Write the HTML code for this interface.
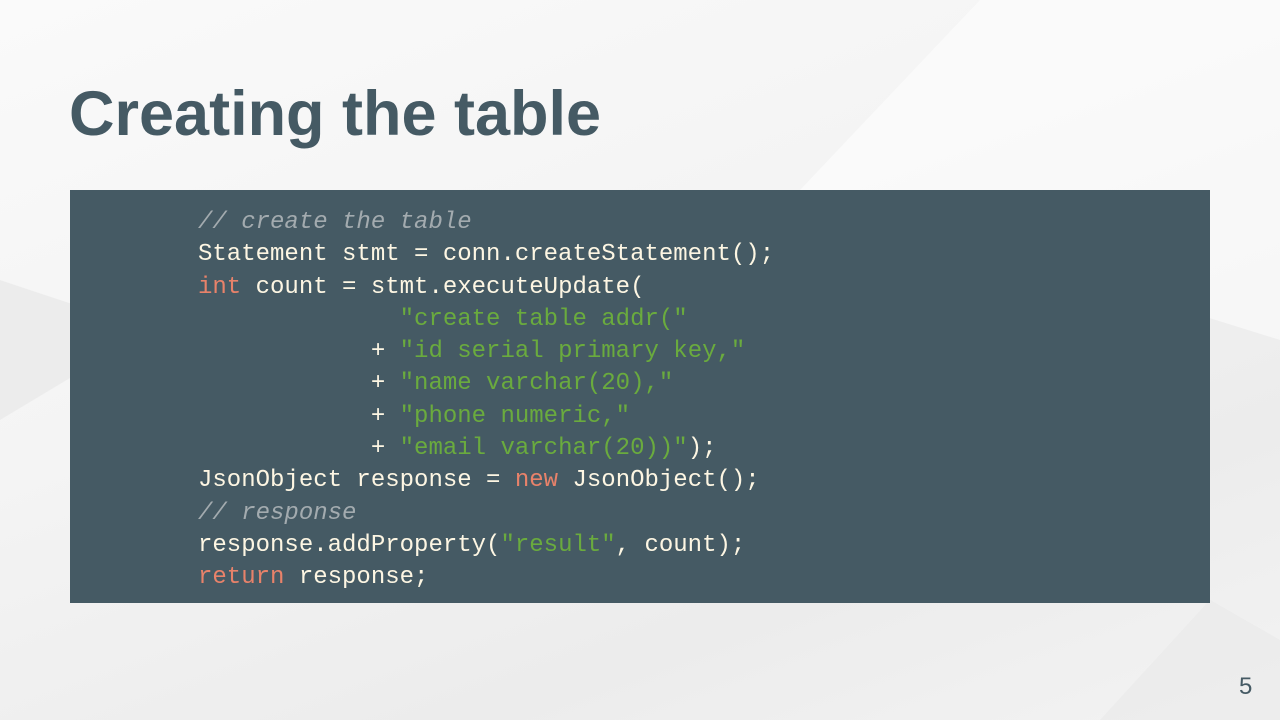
<!DOCTYPE html>
<html><head><meta charset="utf-8"><style>
html,body{margin:0;padding:0}
body{width:1280px;height:720px;position:relative;overflow:hidden;background:linear-gradient(160deg,#fafafa 0%,#f4f4f4 40%,#ececec 75%,#f3f3f3 100%);font-family:"Liberation Sans",sans-serif}
.t{position:absolute;left:69px;top:78px;font-size:63px;font-weight:bold;color:#455a64;letter-spacing:0px;margin:0}
.box{position:absolute;left:70px;top:190px;width:1140px;height:413px;background:#455a64}
pre{position:absolute;left:198px;top:207px;margin:0;font-family:"Liberation Mono",monospace;font-size:24px;line-height:32.3px;color:#fdf6e3}
.c{color:#a3abaf;font-style:italic}.k{color:#e8826a}.s{color:#6aab3e}
.n{position:absolute;left:1239px;top:673px;font-size:24px;color:#455a64}
</style></head><body>
<svg style="position:absolute;left:0;top:0" width="1280" height="720"><polygon points="980,0 1280,0 1280,340 800,190" fill="#fff" opacity=".5"/><polygon points="0,280 150,330 0,420" fill="#e6e6e6" opacity=".6"/><polygon points="1210,600 1280,640 1280,720 1100,720" fill="#e8e8e8" opacity=".5"/></svg>
<h1 class="t">Creating the table</h1>
<div class="box"></div>
<pre><span class="c">// create the table</span>
Statement stmt = conn.createStatement();
<span class="k">int</span> count = stmt.executeUpdate(
              <span class="s">"create table addr("</span>
            + <span class="s">"id serial primary key,"</span>
            + <span class="s">"name varchar(20),"</span>
            + <span class="s">"phone numeric,"</span>
            + <span class="s">"email varchar(20))"</span>);
JsonObject response = <span class="k">new</span> JsonObject();
<span class="c">// response</span>
response.addProperty(<span class="s">"result"</span>, count);
<span class="k">return</span> response;</pre>
<div class="n">5</div>
</body></html>
